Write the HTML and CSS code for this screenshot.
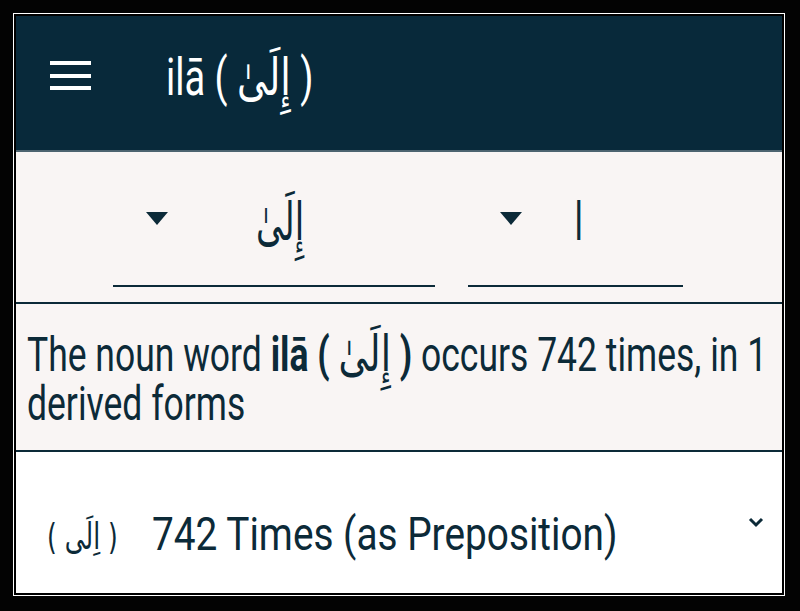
FILE: index.html
```html
<!DOCTYPE html>
<html lang="en">
<head>
    <meta charset="UTF-8">
    <meta name="viewport" content="width=device-width, initial-scale=1.0">
    <title>ilā</title>
    <link rel="stylesheet" href="styles.css">
</head>
<body>
<div class="frame">
    <div class="screen">
        <header class="app-bar">
            <button class="menu-button" aria-label="Menu">
                <span></span><span></span><span></span>
            </button>
            <h1 class="title"><span class="tall">ilā ( <span class="ar" lang="ar">إِلَىٰ</span> )</span></h1>
        </header>

        <div class="pickers">
            <div class="picker picker-word">
                <span class="caret"></span>
                <span class="picker-value" lang="ar">إِلَىٰ</span>
            </div>
            <div class="picker picker-root">
                <span class="caret"></span>
                <span class="picker-value" lang="ar">ا</span>
            </div>
        </div>

        <div class="summary">
            <p class="summary-text">The noun word <b>ilā ( <span class="ar" lang="ar">إِلَىٰ</span> )</b> occurs 742 times, in 1 derived forms</p>
        </div>

        <div class="form-row">
            <span class="form-ar" lang="ar">( اِلَى )</span>
            <span class="form-label">742 Times (as Preposition)</span>
            <svg class="chevron" width="16" height="12" viewBox="0 0 16 12">
                <path d="M2 3 L8 9 L14 3" fill="none" stroke="#0c2a38" stroke-width="3"/>
            </svg>
        </div>
    </div>
</div>
</body>
</html>
```

FILE: styles.css
```css
html, body {
    margin: 0;
    height: 100%;
}
body {
    background-color: #030303;
    padding: 13px 15px 15px 13px;
    box-sizing: border-box;
    font-family: Roboto, "DejaVu Sans", sans-serif;
    color: #0c2a38;
}
.frame {
    height: 100%;
    border: 1px solid #ffffff;
    box-sizing: border-box;
}
.screen {
    height: 100%;
    border: 2px solid #000;
    box-sizing: border-box;
    display: flex;
    flex-direction: column;
    overflow: hidden;
}
.ar {
    font-family: "DejaVu Sans", sans-serif;
    font-weight: 400;
}

/* top bar */
.app-bar {
    height: 134px;
    flex-shrink: 0;
    background-color: #08293a;
    border-bottom: 2px solid #4d6470;
    display: flex;
    align-items: center;
    padding-left: 34px;
}
.menu-button {
    width: 41px;
    height: 29px;
    padding: 0;
    border: none;
    background: none;
    display: flex;
    flex-direction: column;
    justify-content: space-between;
    margin-top: -15px;
}
.menu-button span {
    display: block;
    height: 4px;
    background-color: #ffffff;
}
.title {
    margin: -12px 0 0 75px;
    font-weight: 400;
    font-size: 38px;
    color: #ffffff;
}
.tall {
    display: inline-block;
    transform: scaleY(1.35);
}

/* dropdowns */
.pickers {
    height: 152px;
    flex-shrink: 0;
    background-color: #f9f5f4;
    border-bottom: 2px solid #0c2a38;
    display: flex;
    align-items: flex-end;
    padding: 0 0 15px 97px;
    box-sizing: border-box;
    gap: 33px;
}
.picker {
    height: 100px;
    border-bottom: 2px solid #0c2a38;
    display: flex;
    align-items: center;
    box-sizing: border-box;
}
.picker-word {
    width: 322px;
    padding-left: 33px;
}
.picker-root {
    width: 215px;
    padding-left: 32px;
}
.caret {
    width: 0;
    height: 0;
    border-left: 11px solid transparent;
    border-right: 11px solid transparent;
    border-top: 13px solid #0c2a38;
    margin-top: -36px;
}
.picker-value {
    display: inline-block;
    font-family: "DejaVu Sans", sans-serif;
    font-size: 34px;
    transform: scaleY(1.55);
    margin-top: -30px;
}
.picker-word .picker-value {
    margin-left: 88px;
}
.picker-root .picker-value {
    margin-left: 52px;
}

/* description */
.summary {
    height: 148px;
    flex-shrink: 0;
    background-color: #f9f5f4;
    border-bottom: 2px solid #0c2a38;
    box-sizing: border-box;
    padding: 26px 10px 0 11px;
}
.summary-text {
    margin: 0;
    font-size: 35.5px;
    line-height: 36.6px;
    transform: scaleY(1.35);
    transform-origin: top left;
}
.summary-text b {
    font-weight: 700;
}
.summary-text .ar {
    font-size: 37px;
}

/* derived form row */
.form-row {
    flex: 1;
    background-color: #ffffff;
    display: flex;
    align-items: center;
    padding: 0 18px 0 31px;
}
.form-ar {
    display: inline-block;
    font-family: "DejaVu Sans", sans-serif;
    font-size: 25px;
    width: 105px;
    flex-shrink: 0;
    transform: scaleY(1.45);
    transform-origin: left center;
    margin-top: 28px;
    white-space: nowrap;
}
.form-label {
    flex: 1;
    display: inline-block;
    font-size: 38.8px;
    transform: scaleY(1.2);
    transform-origin: left center;
    margin-top: 22px;
}
.chevron {
    margin-top: -2px;
}
```
